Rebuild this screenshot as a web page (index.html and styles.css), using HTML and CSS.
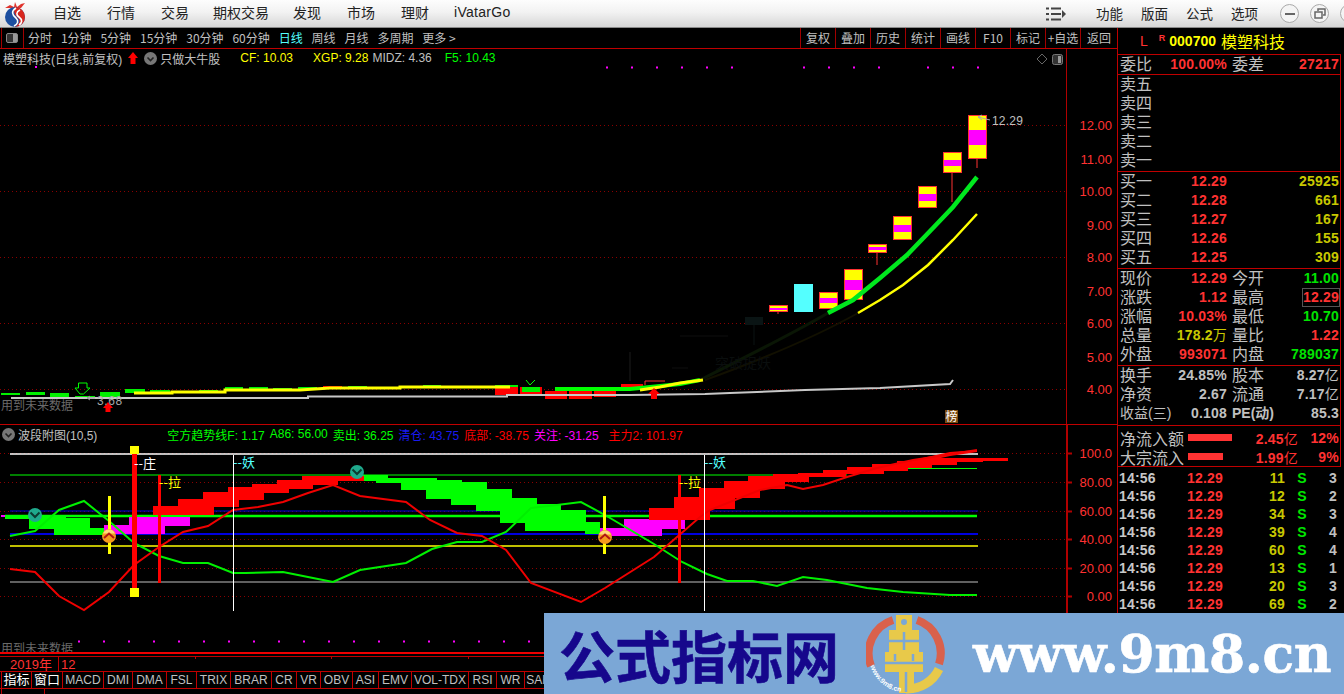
FILE: index.html
```html
<!DOCTYPE html>
<html>
<head>
	<title>模塑科技 000700</title>
	<link rel="stylesheet" href="styles.css">
</head>
<body>
<div class="app">

	<header class="topbar">
		<svg class="logo" width="28" height="28" viewBox="0 0 28 28">
			<path d="M4 8 L9 5 L13 7 L14 2 L16 7 L20 4 L24 3 L20 8 L15 9 L10 8 Z" fill="#e0342c"/>
			<circle cx="14" cy="17" r="10" fill="#1c4fa0"/>
			<path d="M14 7 A10 10 0 0 1 24 17 A10 10 0 0 1 14 27 C18 24 20 21 17 18 C14 15 12 12 14 7 Z" fill="#d8261e"/>
			<path d="M15 8 C10 11 11 15 15 18 C18 21 17 24 13 26 M19 10 C15 12 15 15 18 17 C22 20 21 23 18 25" fill="none" stroke="#fff" stroke-width="1.6"/>
		</svg>
		<nav class="mainmenu">
			<span class="m1">自选</span><span class="m2">行情</span><span class="m3">交易</span><span class="m4">期权交易</span><span class="m5">发现</span><span class="m6">市场</span><span class="m7">理财</span><span class="m8">iVatarGo</span>
		</nav>
		<svg class="listicon" width="20" height="16" viewBox="0 0 20 16">
			<path d="M0 2.5h3M5 2.5h10M0 8h3M5 8h10M0 13.5h3M5 13.5h10" stroke="#444" stroke-width="2"/>
			<path d="M16 4 L20 8 L16 12 Z" fill="#444"/>
		</svg>
		<nav class="sidemenu"><span>功能</span><span>版面</span><span>公式</span><span>选项</span></nav>
		<div class="winbtns">
			<span class="winbtn"><svg width="12" height="12" viewBox="0 0 12 12"><path d="M1 6h10" stroke="#666" stroke-width="2"/></svg></span>
			<span class="winbtn"><svg width="12" height="12" viewBox="0 0 12 12"><path d="M4 3V1h7v6H9M1 4h7v6H1z" fill="none" stroke="#666" stroke-width="1.5"/></svg></span>
			<span class="winbtn"></span>
		</div>
	</header>

	<div class="workspace">
		<div class="charts">
			<div class="toolbar">
				<span class="toggle"><i></i></span>
				<div class="periods">
					<span>分时</span><span>1分钟</span><span>5分钟</span><span>15分钟</span><span>30分钟</span><span>60分钟</span><span class="on">日线</span><span>周线</span><span>月线</span><span>多周期</span><span>更多 &gt;</span>
				</div>
				<div class="tools">
					<span>复权</span><span>叠加</span><span>历史</span><span>统计</span><span>画线</span><span>F10</span><span>标记</span><span>+自选</span><span class="last">返回</span>
				</div>
			</div>

			<section class="pane main-pane">
				<div class="legend">
					<span class="gray">模塑科技(日线,前复权)</span>
					<svg class="up" width="10" height="12" viewBox="0 0 10 12"><path d="M5 0 L10 6 H7.5 V12 H2.5 V6 H0 Z" fill="#f00"/></svg>
					<svg class="chev" width="13" height="13" viewBox="0 0 13 13"><circle cx="6.5" cy="6.5" r="6.5" fill="#777"/><path d="M3.5 5.5 L6.5 8.5 L9.5 5.5" fill="none" stroke="#222" stroke-width="1.6"/></svg>
					<span class="gray">只做大牛股</span>
					<span class="yellow cf">CF: 10.03</span>
					<span class="yellow xgp">XGP: 9.28</span>
					<span class="gray midz">MIDZ: 4.36</span>
					<span class="green f5">F5: 10.43</span>
				</div>
				<svg class="plot" width="1117" height="376" viewBox="0 49 1117 376">
					<g class="grid">
						<path d="M0 125.5H1066M0 191.5H1066M0 257.5H1066M0 323.5H1066M0 389.5H1066"/>
					</g>
					<path class="dots" d="M606 67.5H756M803 67.5H880M927 67.5H980"/>
					<path d="M35 66h2v2h-2z" fill="#f0f"/>
					<path d="M1042 54 L1047 59 L1042 64 L1037 59 Z" fill="none" stroke="#666"/>
					<rect x="1052.5" y="54.5" width="10" height="10" rx="2" fill="#333" stroke="#777"/>
					<rect x="1058" y="56" width="3" height="7" fill="#999"/>

					<!-- masked traces -->
					<g class="masked">
						<path d="M700 380 C740 360 790 335 828 313" stroke="#0a1605" stroke-width="3"/>
						<path d="M705 380 C760 360 810 340 858 313" stroke="#121000" stroke-width="2"/>
						<rect x="745" y="317" width="18" height="8" fill="#0a1414"/>
						<path d="M754 325V345" stroke="#0b1212" stroke-width="1"/>
						<path d="M630 381V352" stroke="#1c1c1c" stroke-width="1"/>
						<path d="M672 368h16M680 336h48" stroke="#0e0e0e" stroke-width="1"/>
						<text class="faint" x="715" y="368">突破捉妖</text>
					</g>

					<!-- small candles on the left -->
					<g class="up-bar">
						<rect x="1" y="393" width="19" height="2"/><rect x="26" y="392" width="19" height="3"/><rect x="50" y="393" width="19" height="5"/><rect x="75" y="396" width="20" height="3"/><rect x="100" y="392" width="20" height="5"/><rect x="125" y="389" width="20" height="4"/><rect x="150" y="390" width="20" height="2"/><rect x="174" y="391" width="19" height="2"/><rect x="199" y="390" width="19" height="3"/><rect x="225" y="387" width="18" height="4"/><rect x="249" y="387" width="19" height="3"/><rect x="273" y="388" width="19" height="2"/><rect x="298" y="387" width="19" height="2"/><rect x="348" y="386" width="19" height="2"/><rect x="423" y="385" width="18" height="2"/>
					</g>
					<g class="down-bar">
						<rect x="323" y="386" width="19" height="2"/>
						<rect x="495" y="385" width="23" height="10"/><rect x="520" y="387" width="22" height="9"/><rect x="545" y="391" width="22" height="8"/><rect x="569" y="391" width="23" height="8"/><rect x="594" y="391" width="22" height="6"/><rect x="621" y="384" width="22" height="4"/>
					</g>
					<rect class="up-bar" x="495" y="385" width="23" height="2"/>
					<rect class="up-bar" x="522" y="387" width="18" height="5"/>
					<path d="M555 389H630L680 384L700 380" stroke="#0f0" stroke-width="4" fill="none"/>
					<polyline class="yellow-line" points="134,393 172,393 172,392 225,392 225,390 300,390 330,388 400,388 400,387 510,387"/>
					<polyline class="yellow-line" points="640,390 660,387 680,383 703,380"/>
					<polyline class="white-line" points="11,398 308,398 308,396.500 507,396.500 507,395 630,395 705,394 730,393 805,390 880,388 950,384 953,380"/>
					<path d="M645 381H665M645 381V385" stroke="#ff3232" fill="none"/>
					<path d="M526 380 L530 385 L535 380" stroke="#0f0" fill="none"/>

					<path d="M81 394 L76 388 H79.500 V383 H88 V388 H91 L84.500 394 Z" transform="translate(-1 0)" fill="none" stroke="#0f0"/>
					<path d="M108 402 L113 408 H110.500 V412 H105.500 V408 H103 Z" fill="#f00"/>
					<path d="M654 388 L660 394 H657 V399 H651 V394 H648 Z" fill="#f00"/>
					<text class="tag" x="97" y="405">3.68</text>
					<path d="M95 398 L87 398 M90 396 L87 398 L90 400" stroke="#999" fill="none"/>
					<text class="dim" x="1" y="410">用到未来数据</text>
					<rect x="945" y="410" width="13" height="13" fill="#7a4a10"/>
					<text class="badge" x="945.500" y="421">榜</text>

					<!-- the big run up -->
					<g class="candle">
						<path d="M778 312v2M877 253v12M952 173v29M977 159v9" stroke="#ff3232" fill="none"/>
						<rect class="body" x="769.500" y="305.500" width="18" height="6"/><rect class="core" x="770" y="308" width="17" height="2"/>
						<rect class="cyan" x="794" y="284" width="19" height="28"/>
						<rect class="body" x="819.500" y="292.500" width="18" height="16"/><rect class="core" x="820" y="298" width="17" height="5"/>
						<rect class="body" x="844.500" y="269.500" width="18" height="30"/><rect class="core" x="845" y="280" width="17" height="10"/>
						<rect class="body" x="868.500" y="244.500" width="18" height="8"/><rect class="core" x="869" y="247" width="17" height="3"/>
						<rect class="body" x="893.500" y="216.500" width="18" height="23"/><rect class="core" x="894" y="225" width="17" height="7"/>
						<rect class="body" x="918.500" y="186.500" width="18" height="21"/><rect class="core" x="919" y="194" width="17" height="7"/>
						<rect class="body" x="943.500" y="152.500" width="18" height="20"/><rect class="core" x="944" y="160" width="17" height="6"/>
						<rect class="body" x="968.500" y="115.500" width="18" height="43"/><rect class="core" x="969" y="130" width="17" height="15"/>
					</g>
					<polyline class="ma-green" points="828,313 853,300 880,278 907,255 933,228 953,207 977,177"/>
					<polyline class="ma-yellow" points="858,313 880,300 903,285 928,265 953,240 977,214"/>
					<path d="M978 117 L990 120 M978 117 L982 115 M978 117 L982 120" stroke="#aaa" fill="none"/>
					<text class="tag big" x="992" y="125">12.29</text>

					<!-- axis -->
					<path class="axis" d="M1066.500 49V425"/>
					<g class="ticks">
						<text x="1112" y="130">12.00</text><text x="1112" y="164">11.00</text><text x="1112" y="196">10.00</text><text x="1112" y="230">9.00</text><text x="1112" y="262">8.00</text><text x="1112" y="296">7.00</text><text x="1112" y="328">6.00</text><text x="1112" y="362">5.00</text><text x="1112" y="394">4.00</text>
					</g>
				</svg>
			</section>

			<section class="pane sub-pane">
				<div class="legend">
					<svg class="chev first" width="13" height="13" viewBox="0 0 13 13"><circle cx="6.5" cy="6.5" r="6.5" fill="#777"/><path d="M3.5 5.5 L6.5 8.5 L9.5 5.5" fill="none" stroke="#222" stroke-width="1.6"/></svg>
					<span class="gray">波段附图(10,5)</span>
					<span class="green kf">空方趋势线F: 1.17</span>
					<span class="green a86">A86: 56.00</span>
					<span class="green sell">卖出: 36.25</span>
					<span class="blue clear">清仓: 43.75</span>
					<span class="red bottom">底部: -38.75</span>
					<span class="pink watch">关注: -31.25</span>
					<span class="red main2">主力2: 101.97</span>
				</div>
				<svg class="plot" width="1117" height="227" viewBox="0 425 1117 227">
					<path class="grid-low" d="M0 453.500H1066M0 482.500H1066M0 511.500H1066M0 539.500H1066M0 568.500H1066M0 596.500H1066"/>

					<g class="hlines">
						<path d="M10 454H978" stroke="#fff" stroke-width="1.500"/>
						<path d="M10 475H847M878 468.500H977" stroke="#0f0"/>
						<path d="M10 511H978" stroke="#0000e0"/>
						<path d="M5 516H977" stroke="#0f0" stroke-width="2.500"/>
						<path d="M10 534H978" stroke="#0000e0" stroke-width="2"/>
						<path d="M10 546H978" stroke="#ff0" stroke-width="1.500"/>
						<path d="M10 582H978" stroke="#808080" stroke-width="1.500"/>
					</g>

					<g fill="#0f0">
						<rect x="5" y="516" width="61" height="3"/><rect x="29" y="518" width="61" height="11"/><rect x="54" y="528" width="61" height="7"/>
						<rect x="363" y="475" width="25" height="6"/><rect x="376" y="478" width="61" height="5"/><rect x="401" y="480" width="61" height="10"/><rect x="426" y="482" width="61" height="17"/><rect x="451" y="489" width="61" height="16"/><rect x="476" y="498" width="61" height="13"/><rect x="500" y="504" width="61" height="19"/><rect x="525" y="510" width="61" height="21"/><rect x="550" y="522" width="50" height="8"/><rect x="585" y="530" width="30" height="4"/>
					</g>
					<g fill="#f0f">
						<rect x="1" y="515" width="4" height="2"/><rect x="104" y="525" width="61" height="9"/><rect x="129" y="517" width="61" height="9"/>
						<rect x="600" y="528" width="62" height="8"/><rect x="624" y="519" width="61" height="10"/>
					</g>
					<g fill="#f00">
						<rect x="153" y="506" width="61" height="9"/><rect x="178" y="499" width="61" height="8"/><rect x="203" y="492" width="61" height="8"/><rect x="228" y="487" width="61" height="6"/><rect x="252" y="484" width="61" height="5"/><rect x="277" y="480" width="61" height="5"/><rect x="302" y="476" width="62" height="5"/>
						<rect x="649" y="508" width="61" height="12"/><rect x="674" y="497" width="61" height="12"/><rect x="700" y="488" width="10" height="32"/><rect x="699" y="488" width="36" height="10"/>
						<rect x="724" y="481" width="36" height="17"/><rect x="748" y="476" width="37" height="13"/><rect x="773" y="474" width="36" height="8"/><rect x="798" y="473" width="48" height="4"/><rect x="823" y="470" width="61" height="4"/><rect x="847" y="467" width="61" height="4"/><rect x="872" y="464" width="60" height="4"/><rect x="897" y="461" width="60" height="4"/><rect x="922" y="458" width="61" height="4"/><rect x="947" y="458" width="61" height="3"/>
						<path d="M913 460 L950 452 L977 450 V452 L950 456 L913 464 Z"/>
					</g>

					<polyline class="osc osc-green" points="10,536 20,534 35,531 59,510 84,501 109,521 134,543 159,556 183,563 208,563 233,573 245,573 283,572 308,577 333,582 360,570 406,563 432,549 457,542 482,542 506,532 531,508 557,505 581,502 605,515 654,544 682,562 707,574 727,581 753,581 777,586 803,577 827,580 867,588 903,592 950,595 977,595"/>
					<polyline class="osc osc-red" points="10,569 35,572 59,596 84,610 109,592 134,565 159,547 183,532 208,526 233,510 258,507 283,502 308,493 333,485 360,496 406,502 430,520 457,533 482,536 506,550 531,583 581,602 605,588 654,557 700,517 710,510 760,490 787,485 803,489 823,485 847,477 877,468 913,460 933,457 977,450"/>

					<g fill="#f00">
						<rect x="132" y="453" width="5" height="135"/><rect x="158" y="475" width="3" height="108"/><rect x="678" y="475" width="3" height="108"/>
					</g>
					<g fill="#ff0">
						<rect x="130" y="446" width="9" height="8"/><rect x="130" y="588" width="9" height="9"/><rect x="108" y="496" width="3" height="58"/><rect x="603" y="496" width="3" height="58"/>
					</g>
					<path d="M233.500 455V611M704.500 455V611" stroke="#fff"/>

					<text class="mark white" x="134" y="468">--庄</text>
					<text class="mark yellowt" x="159" y="487">--拉</text>
					<text class="mark cyan" x="233" y="467">--妖</text>
					<text class="mark yellowt" x="679" y="487">--拉</text>
					<text class="mark cyan" x="704" y="467">--妖</text>

					<g>
						<circle cx="109" cy="536" r="7" fill="#f39a1e"/><path d="M109 529.500a6.500 6.500 0 0 1 6 4h-12a6.500 6.500 0 0 1 6-4z" fill="#ffd97a"/>
						<path d="M104 538 L109 533.500 L114 538" fill="none" stroke="#b21414" stroke-width="2"/>
					</g>
					<g>
						<circle cx="605" cy="537" r="7" fill="#f39a1e"/><path d="M605 530.500a6.500 6.500 0 0 1 6 4h-12a6.500 6.500 0 0 1 6-4z" fill="#ffd97a"/>
						<path d="M600 539 L605 534.500 L610 539" fill="none" stroke="#b21414" stroke-width="2"/>
					</g>
					<g>
						<circle cx="35" cy="515" r="7" fill="#1fa98c"/><path d="M30.500 512.500 L35 517 L39.500 512.500" fill="none" stroke="#0c3a30" stroke-width="2"/>
					</g>
					<g>
						<circle cx="357" cy="472" r="7" fill="#1fa98c"/><path d="M352.500 469.500 L357 474 L361.500 469.500" fill="none" stroke="#0c3a30" stroke-width="2"/>
					</g>

					<path class="dots" d="M78 641.500H1000"/>
					<text class="dim" x="1" y="653">用到未来数据</text>

					<path class="axis thick" d="M1067 425V652M1067 453.500h5M1067 482.500h5M1067 511.500h5M1067 539.500h5M1067 568.500h5M1067 596.500h5"/>
					<g class="ticks">
						<text x="1112" y="458">100.0</text><text x="1112" y="487">80.00</text><text x="1112" y="516">60.00</text><text x="1112" y="544">40.00</text><text x="1112" y="573">20.00</text><text x="1112" y="601">0.00</text>
					</g>
				</svg>
			</section>

			<div class="timeline">
				<span class="year">2019年</span><span class="month">12</span>
				<i class="tick t1"></i><i class="tick t2"></i><i class="tick t3"></i>
			</div>
			<div class="tabs">
				<span class="tab w30 lead">指标</span><span class="tab w31 lead">窗口</span><span class="tab w41">MACD</span><span class="tab w29">DMI</span><span class="tab w34">DMA</span><span class="tab w30">FSL</span><span class="tab w34">TRIX</span><span class="tab w41">BRAR</span><span class="tab w25">CR</span><span class="tab w24">VR</span><span class="tab w32">OBV</span><span class="tab w26">ASI</span><span class="tab w33">EMV</span><span class="tab w57">VOL-TDX</span><span class="tab w28">RSI</span><span class="tab w28">WR</span><span class="tab w28">SAR</span>
			</div>
			<div class="tabs second">
				<span class="tab w43"></span><span class="tab w56"></span>
			</div>
		</div>

		<aside class="quote">
			<div class="q-title"><span class="q-l">L</span><sup class="q-r">R</sup><b>000700</b><span class="q-name">模塑科技</span></div>

			<div class="q-box ratio">
				<div class="q-row"><span>委比</span><b class="up-c">100.00%</b><span class="l2">委差</span><b class="up-c">27217</b></div>
			</div>

			<div class="q-box book">
				<div class="q-row"><span>卖五</span></div>
				<div class="q-row"><span>卖四</span></div>
				<div class="q-row"><span>卖三</span></div>
				<div class="q-row"><span>卖二</span></div>
				<div class="q-row"><span>卖一</span></div>
			</div>

			<div class="q-box book">
				<div class="q-row"><span>买一</span><b class="up-c">12.29</b><span class="l2"></span><b class="vol-c">25925</b></div>
				<div class="q-row"><span>买二</span><b class="up-c">12.28</b><span class="l2"></span><b class="vol-c">661</b></div>
				<div class="q-row"><span>买三</span><b class="up-c">12.27</b><span class="l2"></span><b class="vol-c">167</b></div>
				<div class="q-row"><span>买四</span><b class="up-c">12.26</b><span class="l2"></span><b class="vol-c">155</b></div>
				<div class="q-row"><span>买五</span><b class="up-c">12.25</b><span class="l2"></span><b class="vol-c">309</b></div>
			</div>

			<div class="q-box book">
				<div class="q-row"><span>现价</span><b class="up-c">12.29</b><span class="l2">今开</span><b class="dn-c">11.00</b></div>
				<div class="q-row"><span>涨跌</span><b class="up-c">1.12</b><span class="l2">最高</span><b class="up-c framed">12.29</b></div>
				<div class="q-row"><span>涨幅</span><b class="up-c">10.03%</b><span class="l2">最低</span><b class="dn-c">10.70</b></div>
				<div class="q-row"><span>总量</span><b class="vol-c">178.2<em>万</em></b><span class="l2">量比</span><b class="up-c">1.22</b></div>
				<div class="q-row"><span>外盘</span><b class="up-c">993071</b><span class="l2">内盘</span><b class="dn-c">789037</b></div>
			</div>

			<div class="q-box book tight">
				<div class="q-row"><span>换手</span><b class="plain">24.85%</b><span class="l2">股本</span><b class="plain">8.27<em>亿</em></b></div>
				<div class="q-row"><span>净资</span><b class="plain">2.67</b><span class="l2">流通</span><b class="plain">7.17<em>亿</em></b></div>
				<div class="q-row"><span class="nowrap">收益(三)</span><b class="plain">0.108</b><span class="l2 latin">PE(动)</span><b class="plain">85.3</b></div>
			</div>

			<div class="q-box flow">
				<div class="flow-row"><span>净流入额</span><i class="bar b44"></i><b class="up-c f1">2.45<em>亿</em></b><b class="up-c f2">12%</b></div>
				<div class="flow-row"><span>大宗流入</span><i class="bar b35"></i><b class="up-c f1">1.99<em>亿</em></b><b class="up-c f2">9%</b></div>
			</div>

			<div class="ticks-list">
				<div class="t-row"><b>14:56</b><b class="up-c">12.29</b><b class="vol-c">11</b><b class="dn-c s">S</b><b class="n">3</b></div>
				<div class="t-row"><b>14:56</b><b class="up-c">12.29</b><b class="vol-c">12</b><b class="dn-c s">S</b><b class="n">2</b></div>
				<div class="t-row"><b>14:56</b><b class="up-c">12.29</b><b class="vol-c">34</b><b class="dn-c s">S</b><b class="n">3</b></div>
				<div class="t-row"><b>14:56</b><b class="up-c">12.29</b><b class="vol-c">39</b><b class="dn-c s">S</b><b class="n">4</b></div>
				<div class="t-row"><b>14:56</b><b class="up-c">12.29</b><b class="vol-c">60</b><b class="dn-c s">S</b><b class="n">4</b></div>
				<div class="t-row"><b>14:56</b><b class="up-c">12.29</b><b class="vol-c">13</b><b class="dn-c s">S</b><b class="n">1</b></div>
				<div class="t-row"><b>14:56</b><b class="up-c">12.29</b><b class="vol-c">20</b><b class="dn-c s">S</b><b class="n">3</b></div>
				<div class="t-row"><b>14:56</b><b class="up-c">12.29</b><b class="vol-c">69</b><b class="dn-c s">S</b><b class="n">2</b></div>
			</div>
		</aside>
	</div>

	<div class="watermark">
		<span class="wm-cn">公式指标网</span>
		<svg class="wm-logo" width="80" height="80" viewBox="0 0 80 80">
			<defs><path id="wm-arc" d="M3 38 A37 37 0 0 0 36 78"/></defs>
			<path d="M5 52 A35 35 0 0 1 27 6" fill="none" stroke="#d9614c" stroke-width="8"/>
			<path d="M51 6 A35 35 0 0 1 73 50" fill="none" stroke="#d9614c" stroke-width="8"/>
			<path d="M73 55 A35 35 0 0 1 40 75" fill="none" stroke="#e8c94a" stroke-width="9"/>
			<path d="M30 1 H46 V16 H53 V38 H57 V58 H48 V79 H33 V58 H19 V38 H23 V16 H30 Z" fill="#e8c94a"/>
			<circle cx="38" cy="8" r="3" fill="#7ba7d6"/>
			<path d="M23 27 H53 M38 18 V36 M19 49 H57 M29 40 V47 M47 40 V47 M40 58 V78" stroke="#7ba7d6" stroke-width="2.500" fill="none"/>
			<text class="wm-small"><textPath href="#wm-arc" startOffset="14">www.9m8.cn</textPath></text>
		</svg>
		<span class="wm-url">www.9m8.cn</span>
	</div>

</div>
</body>
</html>
```

FILE: styles.css
```css
*{
	padding: 0;
	margin: 0;
	box-sizing: border-box;
}
html, body{
	width: 1344px;
	height: 694px;
	overflow: hidden;
	background: #000;
}
body{
	font-family: "Liberation Sans", "Noto Sans CJK SC", sans-serif;
	font-size: 12px;
	color: #c0c0c0;
}
em{
	font-style: normal;
	font-weight: 400;
}
i{
	font-style: normal;
}
.app{
	position: relative;
	width: 1344px;
	height: 694px;
	overflow: hidden;
	display: flex;
	flex-direction: column;
}

/* top menu */
.topbar{
	height: 28px;
	flex: none;
	display: flex;
	align-items: center;
	background: linear-gradient(#fdfdfd, #f2f2f2 45%, #d6d6d6);
	border-bottom: 1px solid #8a8a8a;
	color: #222;
	font-family: "Noto Sans CJK SC", sans-serif;
	font-size: 14px;
}
.logo{
	margin-left: 1px;
	flex: none;
}
.mainmenu{
	margin-left: 24px;
	width: 481px;
	flex: none;
	display: flex;
	align-items: center;
	padding-bottom: 3px;
}
.mainmenu span{
	flex: none;
}
.m2, .m3, .m5, .m6, .m7{
	margin-left: 26px;
}
.m4{
	margin-left: 24px;
}
.m5{
	margin-left: 24px;
}
.m8{
	margin-left: 25px;
	font-family: "Liberation Sans", sans-serif;
	letter-spacing: .3px;
}
.listicon{
	margin-left: 512px;
	flex: none;
}
.sidemenu{
	margin-left: 30px;
	display: flex;
	gap: 18px;
	font-size: 13.5px;
	padding-bottom: 2px;
	flex: none;
}
.winbtns{
	margin-left: 22px;
	display: flex;
	gap: 11px;
	flex: none;
}
.winbtn{
	width: 19px;
	height: 19px;
	border: 1px solid #aaa;
	border-radius: 50%;
	display: flex;
	align-items: center;
	justify-content: center;
	background: #f4f4f4;
}

/* body of the window */
.workspace{
	flex: 1;
	display: flex;
	min-height: 0;
}
.charts{
	width: 1117px;
	flex: none;
	display: flex;
	flex-direction: column;
}

.toolbar{
	height: 21px;
	flex: none;
	display: flex;
	border-bottom: 1px solid #c00000;
	font-family: "Noto Sans CJK SC", sans-serif;
	font-size: 12px;
	line-height: 20px;
}
.toggle{
	margin-left: 1px;
	width: 23px;
	border-left: 1px solid #a00000;
	border-right: 1px solid #a00000;
	display: flex;
	align-items: center;
	justify-content: center;
}
.toggle i{
	width: 12px;
	height: 10px;
	border: 1px solid #888;
	border-radius: 2px;
	background: linear-gradient(90deg, #333 60%, #999 60%);
}
.periods{
	margin-left: 4px;
	width: 773px;
	display: flex;
	gap: 8.9px;
}
.periods .on{
	color: #54ffff;
}
.tools{
	display: flex;
}
.tools span{
	width: 35px;
	text-align: center;
	border-left: 1px solid #a00000;
}
.tools .last{
	width: 37px;
}

.pane{
	position: relative;
	flex: none;
}
.main-pane{
	height: 376px;
	border-bottom: 1px solid #c00000;
	overflow: hidden;
}
.sub-pane{
	height: 227px;
}
.plot{
	display: block;
	overflow: visible;
}
.legend{
	position: absolute;
	left: 3px;
	top: 1px;
	height: 16px;
	display: flex;
	align-items: center;
	white-space: nowrap;
	font-size: 12px;
}
.sub-pane .legend{
	left: 2px;
	top: 1px;
}
.legend .up{
	margin-left: 6px;
}
.legend .chev{
	margin: 0 3px 0 6px;
}
.legend .chev.first{
	margin: 0 3px 0 0;
}
.gray{ color: #c0c0c0; }
.yellow{ color: #ffff00; }
.green{ color: #00ff00; }
.blue{ color: #1a1af0; }
.red{ color: #ff0000; }
.pink{ color: #ff00ff; }
.cf{ margin-left: 20px; }
.xgp{ margin-left: 20px; }
.midz{ margin-left: 4px; }
.f5{ margin-left: 13px; }
.kf{ margin-left: 70px; }
.a86{ margin-left: 5px; }
.sell{ margin-left: 5px; }
.clear{ margin-left: 5px; }
.bottom{ margin-left: 5px; }
.watch{ margin-left: 5px; }
.main2{ margin-left: 10px; }

/* svg chart bits */
.grid path, .grid-low{
	fill: none;
	stroke: #8a0000;
	stroke-dasharray: 1 3;
}
.dots{
	fill: none;
	stroke: #f0f;
	stroke-width: 2;
	stroke-dasharray: 2 23;
}
.masked path{
	fill: none;
}
.faint{
	fill: #0a0e0e;
	font-size: 14px;
	font-family: "Noto Sans CJK SC", sans-serif;
}
.up-bar{ fill: #00f000; }
.down-bar{ fill: #ff0000; }
.yellow-line{
	fill: none;
	stroke: #ffff00;
	stroke-width: 3;
}
.white-line{
	fill: none;
	stroke: #c8c8c8;
	stroke-width: 2;
}
.candle .body{
	fill: #ffff00;
	stroke: #ff3232;
}
.candle .core{
	fill: #ff00ff;
}
.candle .cyan{
	fill: #54ffff;
}
.ma-green{
	fill: none;
	stroke: #00e81e;
	stroke-width: 4.5;
}
.ma-yellow{
	fill: none;
	stroke: #ffff00;
	stroke-width: 2.5;
}
.tag{
	fill: #a8a8a8;
	font-size: 12px;
	letter-spacing: .6px;
}
.tag.big{
	font-size: 12px;
	letter-spacing: .2px;
	fill: #c0c0c0;
}
.dim{
	fill: #6a6a6a;
	font-size: 12px;
	font-family: "Noto Sans CJK SC", sans-serif;
}
.badge{
	fill: #fff;
	font-size: 12px;
	font-family: "Noto Sans CJK SC", sans-serif;
}
.axis{
	fill: none;
	stroke: #b00000;
}
.axis.thick{
	stroke-width: 2;
}
.ticks text{
	fill: #ff3232;
	font-size: 13px;
	text-anchor: end;
}
.hlines path{
	fill: none;
}
.osc{
	fill: none;
	stroke-width: 2;
}
.osc-green{ stroke: #00f000; }
.osc-red{ stroke: #f00000; }
.mark{
	font-size: 13px;
	font-family: "Noto Sans CJK SC", sans-serif;
}
.mark.white{ fill: #fff; }
.mark.yellowt{ fill: #ffff00; }
.mark.cyan{ fill: #54ffff; }

/* date strip and tabs */
.timeline{
	position: relative;
	height: 20px;
	flex: none;
	border-top: 2px solid #f00000;
	border-bottom: 1px solid #c00000;
	box-shadow: inset 0 2px 0 #000, inset 0 3px 0 #c00000;
	display: flex;
	align-items: center;
	color: #ff3232;
	font-size: 13px;
	padding-top: 3px;
}
.year{
	width: 59px;
	padding-left: 10px;
	border-right: 1px solid #c00000;
	height: 15px;
	line-height: 15px;
}
.month{
	padding-left: 2px;
}
.tick{
	position: absolute;
	top: 3px;
	width: 1px;
	height: 2px;
	background: #c00000;
}
.t1{ left: 195px; }
.t2{ left: 331px; }
.t3{ left: 468px; }
.tabs{
	height: 17px;
	flex: none;
	display: flex;
	white-space: nowrap;
	border-bottom: 1px solid #c00000;
	font-size: 12px;
	line-height: 16px;
	color: #c0c0c0;
	padding-left: 1px;
}
.tab{
	flex: none;
	text-align: center;
	border-left: 1px solid #c00000;
}
.tab.lead{
	color: #fff;
	font-size: 13px;
}
.w24{ width: 24px; }
.w25{ width: 25px; }
.w26{ width: 26px; }
.w28{ width: 28px; }
.w29{ width: 29px; }
.w30{ width: 30px; }
.w31{ width: 31px; }
.w32{ width: 32px; }
.w33{ width: 33px; }
.w34{ width: 34px; }
.w41{ width: 41px; }
.w43{ width: 43px; }
.w56{ width: 56px; }
.w57{ width: 57px; }
.tabs.second{
	border-bottom: 0;
}

/* quote panel on the right */
.quote{
	width: 227px;
	flex: none;
	border-left: 1px solid #c00000;
	padding-right: 3px;
	overflow: hidden;
}
.q-title{
	height: 26px;
	display: flex;
	align-items: center;
	color: #ffff00;
}
.q-l{
	margin-left: 22px;
	color: #ff3232;
	font-size: 14px;
}
.q-r{
	margin: 0 0 6px 11px;
	color: #ff3232;
	font-size: 9px;
	font-weight: 700;
}
.q-title b{
	margin-left: 4px;
	font-size: 14px;
}
.q-name{
	margin-left: 5px;
	font-size: 16px;
	font-family: "Noto Sans CJK SC", sans-serif;
}
.q-box{
	border-top: 1px solid #c00000;
	border-right: 1px solid #c00000;
}
.ratio{
	height: 20px;
}
.book{
	padding: 0 0 1px;
}
.book.tight{
	padding: 0 0 2px;
}
.q-row{
	height: 19px;
	display: grid;
	grid-template-columns: 32px 75px 37px 75px;
	padding-left: 2px;
	align-items: center;
	font-size: 16px;
	line-height: 19px;
	white-space: nowrap;
}
.q-row b, .flow-row b, .t-row b{
	font-size: 14px;
	text-align: right;
	letter-spacing: .2px;
}
.l2{
	padding-left: 5px;
}
.nowrap{
	font-size: 14px;
}
.latin{
	font-size: 14px;
	font-weight: 700;
}
.up-c{ color: #ff3232; }
.dn-c{ color: #00e400; }
.vol-c{ color: #c8c800; }
.plain{ color: #c0c0c0; }
.framed{
	outline: 1px solid #555;
	margin-left: 39px;
	padding-right: 1px;
	line-height: 17px;
}
.flow{
	border-top: 1px solid #c00000;
	padding: 2px 0 0;
}
.flow-row{
	height: 19px;
	display: flex;
	align-items: center;
	padding-left: 2px;
	font-size: 16px;
	white-space: nowrap;
}
.flow-row span{
	width: 68px;
	flex: none;
}
.bar{
	height: 7px;
	flex: none;
	background: #ff3232;
}
.b44{
	width: 44px;
}
.b35{
	width: 35px;
	margin-right: 9px;
}
.f1{
	width: 66px;
	flex: none;
}
.f2{
	width: 41px;
	flex: none;
}
.ticks-list{
	border-top: 1px solid #c00000;
	padding-top: 2px;
}
.t-row{
	height: 18px;
	display: grid;
	grid-template-columns: 40px 64px 62px 34px 18px;
	padding-left: 1px;
	align-items: center;
}
.t-row b:first-child{
	text-align: left;
	color: #c8c8c8;
}
.t-row .s{
	text-align: center;
}
.t-row .n{
	color: #c0c0c0;
}

/* site banner over the corner */
.watermark{
	position: absolute;
	left: 544px;
	top: 613px;
	width: 800px;
	height: 81px;
	background: #7ba7d6;
	display: flex;
	align-items: center;
	overflow: hidden;
}
.wm-cn{
	margin-left: 15px;
	width: 307px;
	font-family: "Noto Sans CJK SC", sans-serif;
	font-weight: 700;
	font-size: 56px;
	line-height: 60px;
	color: #16078c;
	-webkit-text-stroke: .6px #16078c;
	flex: none;
}
.wm-logo{
	flex: none;
}
.wm-small{
	fill: #fff;
	font-size: 7px;
	font-weight: 700;
}
.wm-url{
	margin-left: 27px;
	font-family: "DejaVu Serif", serif;
	font-weight: 700;
	font-size: 52px;
	line-height: 60px;
	letter-spacing: -.4px;
	color: #fff;
	-webkit-text-stroke: .6px #fff;
	flex: none;
}
```
